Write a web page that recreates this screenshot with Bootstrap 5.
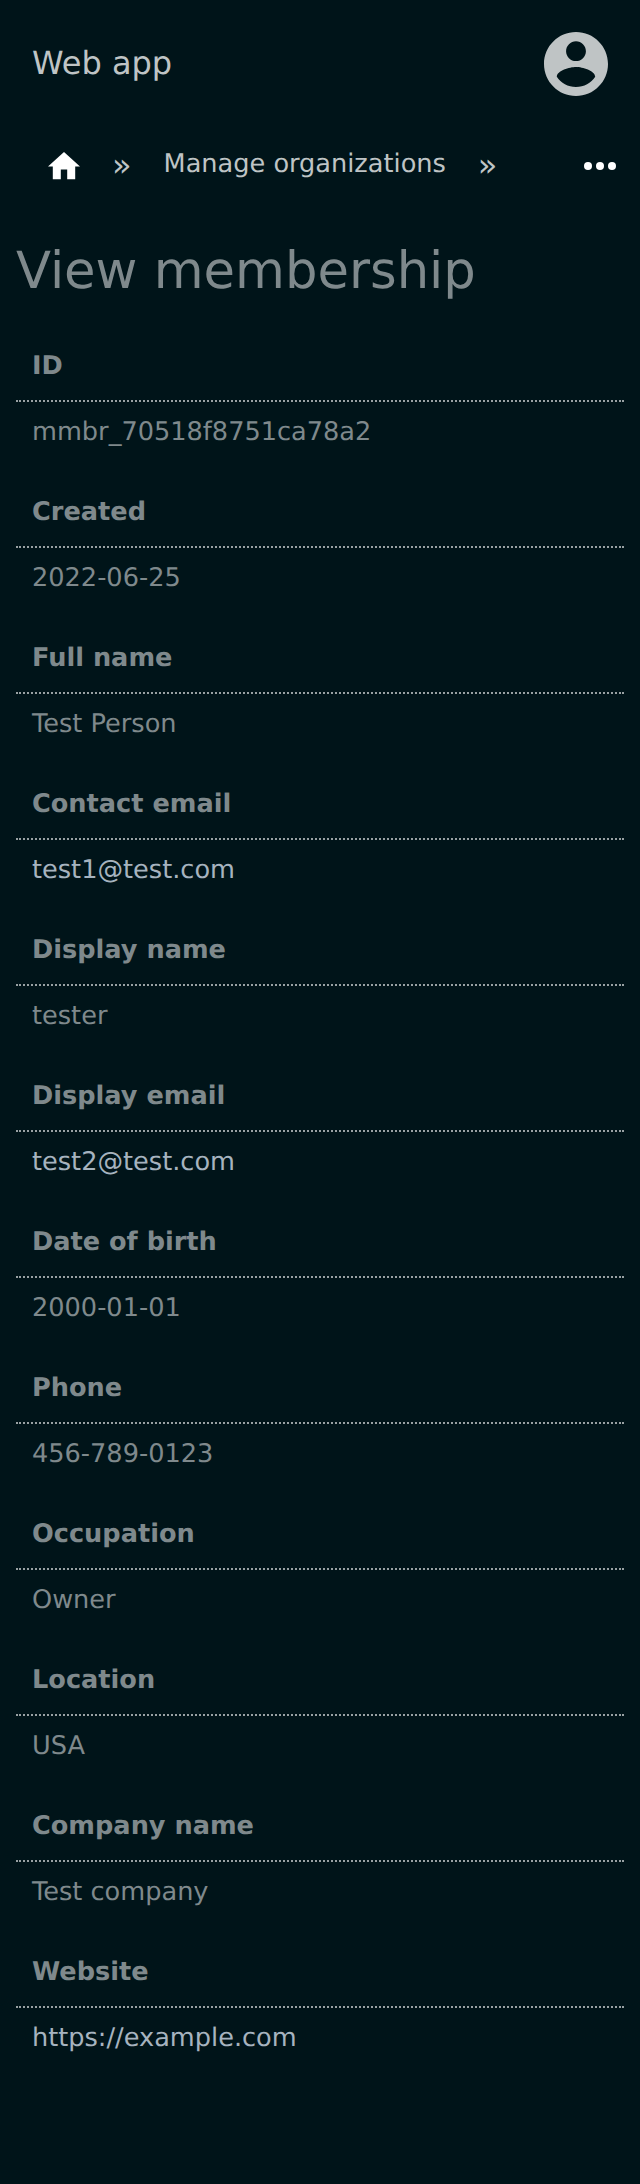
<!DOCTYPE html>
<html lang="en">
<head>
<meta charset="utf-8">
<meta name="viewport" content="width=device-width, initial-scale=1">
<title>View membership</title>
<link href="https://cdn.jsdelivr.net/npm/bootstrap@5.3.0/dist/css/bootstrap.min.css" rel="stylesheet">
<style>
  body { background: #001419; color: #7f898c; font-family: "DejaVu Sans", sans-serif; font-size: 25.6px; line-height: 38px; min-height: 2184px; text-rendering: geometricPrecision; }
  a { color: #a6b3bf; text-decoration: none; }
  .app-bar { height: 128px; padding: 0 32px; }
  .app-bar a { color: #bfc4c5; }
  .app-name { font-size: 32px; line-height: 48px; margin-bottom: 2px; }
  .crumbs { height: 76px; padding: 0 24px 0 48px; gap: 32px; color: #bfc4c5; }
  .crumbs a { color: #bfc4c5; }
  .crumbs .crumb-link { margin-bottom: 4px; }
  .crumbs .sep { font-size: 32px; line-height: 48px; margin-bottom: 2px; }
  .page-title { font-size: 51.2px; line-height: 62px; margin: 36px 16px 2px; font-weight: 400; }
  .fields { margin: 0 16px; }
  .fields dt { padding: 43px 16px 15px; border-bottom: 2px dotted #99a1a3; font-weight: 700; }
  .fields dd { padding: 11px 16px 0; margin: 0 0 -1px; }
</style>
</head>
<body>
<header class="app-bar d-flex align-items-center justify-content-between">
  <a class="app-name" href="#">Web app</a>
  <a href="#" aria-label="Account" class="d-flex">
    <svg width="64" height="64" viewBox="2 2 20 20" fill="currentColor"><path d="M12 2C6.48 2 2 6.48 2 12s4.480 10 10 10 10-4.480 10-10S17.520 2 12 2zm0 2.900c1.700 0 3.100 1.400 3.100 3.100s-1.400 3.100-3.100 3.100-3.100-1.400-3.100-3.100 1.400-3.100 3.100-3.100zm0 14.300c-2.500 0-4.710-1.280-6-3.220.030-1.990 4-3.080 6-3.080 1.990 0 5.970 1.090 6 3.080-1.290 1.940-3.500 3.220-6 3.220z"/></svg>
  </a>
</header>
<nav class="crumbs d-flex align-items-center" aria-label="Breadcrumb">
  <a href="#" aria-label="Home" class="d-flex text-white">
    <svg width="32" height="28" viewBox="2 3 20 17.500" fill="currentColor"><path d="M10 20v-6h4v6h5v-8h3L12 3 2 12h3v8z"/></svg>
  </a>
  <span class="sep">»</span>
  <a href="#" class="crumb-link">Manage organizations</a>
  <span class="sep">»</span>
  <a href="#" aria-label="More" class="d-flex text-white ms-auto">
    <svg width="32" height="8" viewBox="0 0 32 8" fill="currentColor"><circle cx="4" cy="4" r="4"/><circle cx="16" cy="4" r="4"/><circle cx="28" cy="4" r="4"/></svg>
  </a>
</nav>
<main>
  <h1 class="page-title">View membership</h1>
  <dl class="fields">
    <dt>ID</dt><dd>mmbr_70518f8751ca78a2</dd>
    <dt>Created</dt><dd>2022-06-25</dd>
    <dt>Full name</dt><dd>Test Person</dd>
    <dt>Contact email</dt><dd><a href="#">test1@test.com</a></dd>
    <dt>Display name</dt><dd>tester</dd>
    <dt>Display email</dt><dd><a href="#">test2@test.com</a></dd>
    <dt>Date of birth</dt><dd>2000-01-01</dd>
    <dt>Phone</dt><dd>456-789-0123</dd>
    <dt>Occupation</dt><dd>Owner</dd>
    <dt>Location</dt><dd>USA</dd>
    <dt>Company name</dt><dd>Test company</dd>
    <dt>Website</dt><dd><a href="#">https://example.com</a></dd>
  </dl>
</main>
<script src="https://cdn.jsdelivr.net/npm/bootstrap@5.3.0/dist/js/bootstrap.bundle.min.js"></script>
</body>
</html>
